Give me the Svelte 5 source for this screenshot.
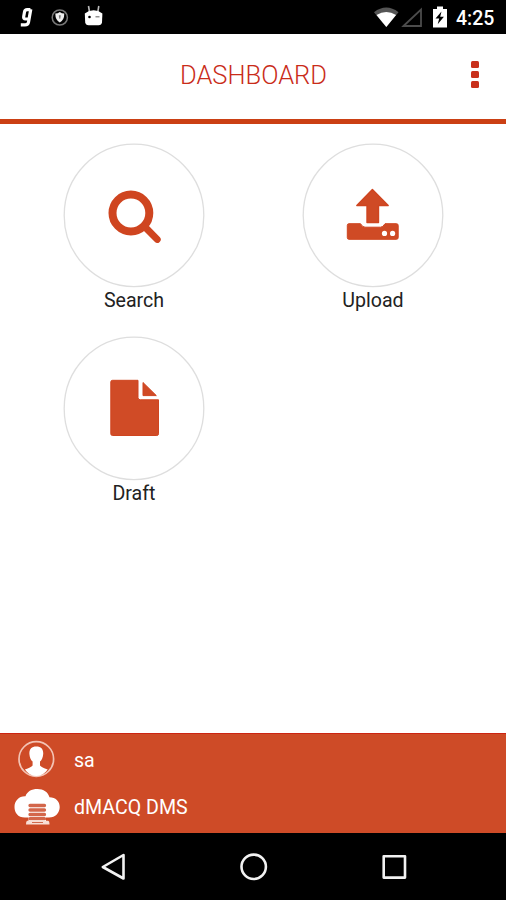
<script>
  const tiles = [
    { id: 'search', label: 'Search' },
    { id: 'upload', label: 'Upload' },
    { id: 'draft', label: 'Draft' }
  ];
</script>

<div class="screen">
  <div class="status">
    <svg class="left" width="110" height="34" viewBox="0 0 110 34">
      <path d="M30.800 9.200 28.500 22.200q-.5 2.600-3.500 2.600h-4.200M30.400 9.600h-3.200q-2.300 0-2.700 2.400l-.8 4.400q-.4 2.600 1.800 2.600h3.200" fill="none" stroke="#fff" stroke-width="3.200" />
      <circle cx="59.800" cy="17.500" r="7.600" fill="none" stroke="#777" stroke-width="1.500" />
      <path d="M55.300 13.500q2.600 0 4.500-1.500 1.900 1.500 4.500 1.500 0 6.700-4.500 9-4.500-2.300-4.500-9z" fill="#eee" />
      <path d="M58.800 15.300h2l-.5 3.500h-1z" fill="#777" />
      <path d="m88.500 6 1 6m9.300-6-1 6" stroke="#bbb" stroke-width="1.600" />
      <path d="M84.800 13.500q4-3.300 8.800-3.300t8.800 3.300l-.4 8.700q-.4 3-3.400 3h-10q-3 0-3.400-3z" fill="#fff" />
      <circle cx="89.500" cy="17" r="1.300" />
      <path d="M95.500 16.800h4" stroke="#777" stroke-width="1.200" />
    </svg>
    <svg class="right" width="76" height="34" viewBox="374 0 76 34">
      <path d="M374 12.200q12.200-9.200 24.500 0L386.300 27z" fill="#555" />
      <path d="M376.500 15q9.800-6 19.600 0l-9.800 12z" fill="#fff" />
      <path d="M403.500 26 421 9.500V26z" fill="none" stroke="#4c4c4c" stroke-width="1.800" />
      <path d="M433 9h4V6.500h6V9h4v18.500h-14z" fill="#fff" />
      <path d="m441.500 11.500-6 7h3.700l-1.500 5.800 6.200-7.500h-3.700z" fill="#000" />
    </svg>
    <span>4:25</span>
  </div>

  <header>
    <h1>DASHBOARD</h1>
    <div class="menu"><i></i><i></i><i></i></div>
  </header>

  <main>
    {#each tiles as tile (tile.id)}
      <div class="tile">
        <svg width="142" height="145" viewBox="0 0 142 145">
          <ellipse cx="71" cy="72.400" rx="69.800" ry="71.200" fill="#fff" stroke="#dedede" stroke-width="1.300" />
          {#if tile.id === 'search'}
            <g fill="none" stroke="#cf4520">
              <circle cx="67.900" cy="70" r="18.400" stroke-width="8" />
              <path d="m81.500 83.500 12.700 12.900" stroke-width="7" stroke-linecap="round" />
            </g>
          {:else if tile.id === 'upload'}
            <g fill="#cf4a25" stroke="#cf4520" stroke-linejoin="round">
              <path d="M70.400 46.500 86.200 62.500H76.500V79.500H65V62.500H54.800z" stroke-width="1.400" />
              <path d="M47 80.700H58.500Q60.500 84.200 63 84.200H78.500Q81 84.200 83 80.700H94.500Q96.200 80.700 96.200 82.400V94.600Q96.200 96.300 94.500 96.300H47Q45.300 96.300 45.300 94.600V82.400Q45.300 80.700 47 80.700z" />
            </g>
            <circle cx="82.500" cy="90.400" r="2.600" fill="#fff" />
            <circle cx="90.600" cy="90.400" r="2.600" fill="#fff" />
          {:else}
            <g fill="#d04b26" stroke="#cf4520" stroke-linejoin="round">
              <path d="M49.500 44.300H75V61.500Q75 63.800 77.300 63.800H95.500V97.800Q95.500 99.500 93.800 99.500H49.500Q47.800 99.500 47.800 97.800V46Q47.800 44.300 49.500 44.300z" />
              <path d="M80 46.500V59.600H93.300z" />
            </g>
          {/if}
        </svg>
        <span>{tile.label}</span>
      </div>
    {/each}
  </main>

  <footer>
    <div class="row">
      <svg width="46" height="40" viewBox="14 740 46 40">
        <circle cx="36.300" cy="759" r="17.300" fill="none" stroke="#f3c3b4" stroke-width="1.700" />
        <path d="M36.300 746.500c5 0 7.200 3 6.900 7.400-.2 3.800-1.700 6.200-3.200 7.700v4q1.600 2 7.700 3.800-4.600 6.600-11.400 6.600t-11.400-6.600q6.100-1.800 7.700-3.800v-4c-1.500-1.500-3-3.900-3.200-7.700-.3-4.400 1.900-7.400 6.900-7.400z" fill="#fff" />
      </svg>
      <span>sa</span>
    </div>
    <div class="row">
      <svg width="46" height="40" viewBox="14 787 46 40">
        <path d="M26 817.500C18 818 14.500 812.800 14.500 807c0-6 4.500-11 11-10.700C27 791.500 31.500 789 37.500 789s10.500 3 12 8.300c6 0 10.200 4.200 10.200 9.700 0 6-4.500 11-11.700 10.500z" fill="#fff" />
        <path d="M28.500 803.500h17.500v18h-17.500z" fill="#fff" />
        <path d="M30 805.500h14.500M30 810h14.500M30 814.500h14.500M30 818.700h14.500" stroke="#d3664a" stroke-width="3.300" stroke-linecap="round" />
        <path d="M27.500 820.700h20.500q1.500 0 1.500 3.800H26q0-3.800 1.500-3.800z" fill="#f8ddd4" />
        <path d="M32 822.500h11" stroke="#d16a4d" stroke-width="1" />
      </svg>
      <span>dMACQ DMS</span>
    </div>
  </footer>

  <nav>
    <svg width="506" height="67" viewBox="0 833 506 67" fill="none" stroke="#f2f2f2" stroke-width="2.600" stroke-linejoin="round">
      <path d="M102.800 867 123.500 855V878.500z" />
      <circle cx="253.700" cy="866.800" r="12.200" />
      <rect x="383.700" y="856.300" width="21.300" height="21.300" />
    </svg>
  </nav>
</div>

<style>
  .screen {
    width: 506px;
    height: 900px;
    display: flex;
    flex-direction: column;
    background: #fff;
    font-family: Roboto, "Liberation Sans", sans-serif;
    overflow: hidden;
  }
  svg { display: block; flex: none; }
  .status {
    height: 34px;
    flex: none;
    display: flex;
    background: #000;
    color: #fff;
  }
  .right { margin-left: 264px; }
  .status span {
    margin-left: 6px;
    font-size: 19.500px;
    font-weight: 500;
    line-height: 37px;
    white-space: nowrap;
  }
  header {
    box-sizing: border-box;
    height: 90px;
    flex: none;
    display: grid;
    grid-template-columns: 60px 1fr 60px;
    align-items: center;
    border-bottom: 5px solid #cb4014;
    padding-bottom: 4px;
  }
  h1 {
    grid-column: 2;
    margin: 0;
    padding-left: 1px;
    text-align: center;
    color: #c92c19;
    font-size: 25.500px;
    font-weight: 300;
    line-height: 30px;
  }
  .menu {
    display: flex;
    flex-direction: column;
    gap: 3px;
    padding-left: 25px;
  }
  .menu i {
    width: 8px;
    height: 7px;
    border-radius: 1.500px;
    background: #c9301b;
  }
  main {
    flex: 1;
    display: grid;
    grid-template-columns: 142px 142px;
    grid-auto-rows: 193px;
    column-gap: 97px;
    padding: 19px 0 0 63px;
    align-content: start;
  }
  .tile {
    display: flex;
    flex-direction: column;
    align-items: center;
  }
  .tile span {
    font-size: 19.600px;
    line-height: 26px;
    color: #222;
  }
  footer {
    box-sizing: border-box;
    height: 100px;
    flex: none;
    background: #ce4b27;
    border-top: 1px solid #cc2412;
    padding: 6px 0 0 14px;
    color: #fff;
  }
  .row {
    height: 47px;
    display: flex;
    gap: 14px;
  }
  .row span {
    font-size: 19.600px;
    line-height: 42px;
  }
  nav {
    height: 67px;
    flex: none;
    background: #000;
  }
</style>
